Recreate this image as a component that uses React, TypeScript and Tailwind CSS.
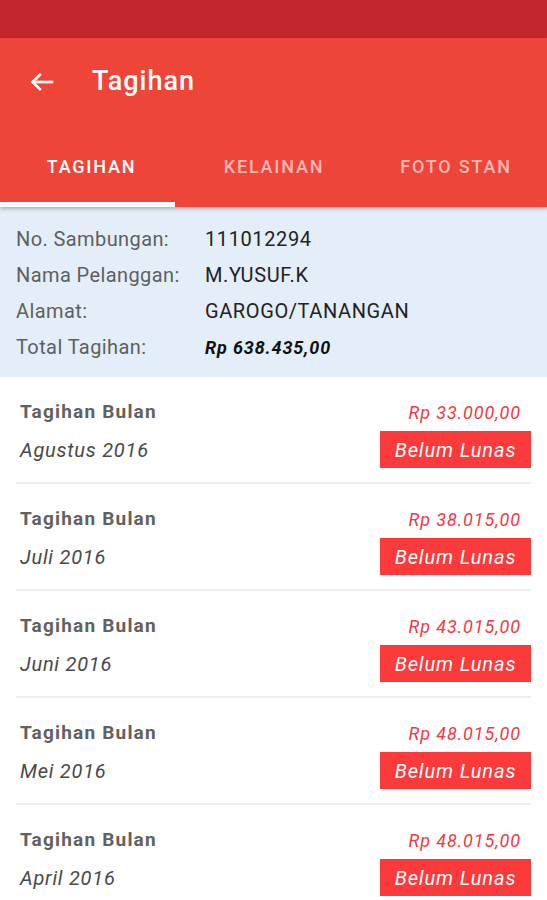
import React from "react";

const items = [
  { month: "Agustus 2016", amount: "Rp 33.000,00" },
  { month: "Juli 2016", amount: "Rp 38.015,00" },
  { month: "Juni 2016", amount: "Rp 43.015,00" },
  { month: "Mei 2016", amount: "Rp 48.015,00" },
  { month: "April 2016", amount: "Rp 48.015,00" },
];

const info = [
  { label: "No. Sambungan:", value: "111012294" },
  { label: "Nama Pelanggan:", value: "M.YUSUF.K" },
  { label: "Alamat:", value: "GAROGO/TANANGAN" },
];

export default function App() {
  return (
    <div
      className="w-[547px] h-[900px] overflow-hidden bg-white"
      style={{ fontFamily: "Roboto, 'Noto Sans', sans-serif" }}
    >
      <div className="h-[38px] bg-[#c4272b]" />
      <div className="bg-[#ef4539] relative z-10 shadow-[0_2px_4px_rgba(0,0,0,0.25)]">
        <div className="h-[87px] flex items-center">
          <svg
            width="28"
            height="28"
            viewBox="0 0 24 24"
            className="ml-[28px]"
            fill="none"
            stroke="white"
            strokeWidth="2.3"
            strokeLinecap="square"
          >
            <path d="M20.5 12H5" />
            <path d="M11 5l-7 7 7 7" strokeLinecap="butt" />
          </svg>
          <div className="ml-[36px] text-white text-[27px] font-medium tracking-[1px]">Tagihan</div>
        </div>
        <div className="h-[82px] flex relative">
          <div className="w-[183px] flex items-center justify-center text-white text-[18px] font-medium tracking-[1.8px] pt-[1px]">
            TAGIHAN
          </div>
          <div className="w-[182px] flex items-center justify-center text-[#fab9b3] text-[18px] font-medium tracking-[1.8px] pt-[1px]">
            KELAINAN
          </div>
          <div className="w-[182px] flex items-center justify-center text-[#fab9b3] text-[18px] font-medium tracking-[1.8px] pt-[1px]">
            FOTO STAN
          </div>
          <div className="absolute left-0 bottom-0 w-[175px] h-[5px] bg-white" />
        </div>
      </div>
      <div className="bg-[#e3eef9] pt-[14px] pb-[12px] px-4">
        {info.map((r) => (
          <div key={r.label} className="h-[36px] flex items-center text-[20px]">
            <div className="w-[189px] text-[#5f5f5f] tracking-[0.4px]">{r.label}</div>
            <div className="text-[#222] tracking-[0.6px]">{r.value}</div>
          </div>
        ))}
        <div className="h-[36px] flex items-center text-[20px]">
          <div className="w-[189px] text-[#5f5f5f] tracking-[0.4px]">Total Tagihan:</div>
          <div className="text-[#111] font-bold italic text-[18px] tracking-[0.85px]">Rp 638.435,00</div>
        </div>
      </div>
      <div className="px-4">
        {items.map((it) => (
          <div key={it.month} className="pt-[23px] pb-[14px] border-b-2 border-[#eeeeee]">
            <div className="h-[24px] flex items-center justify-between pl-1 pr-[10px]">
              <div className="text-[19px] font-bold text-[#616161] tracking-[1.2px]">Tagihan Bulan</div>
              <div className="text-[18px] italic text-[#ee3b3f] tracking-[0.9px]">{it.amount}</div>
            </div>
            <div className="mt-[7px] h-[37px] flex items-center justify-between pl-1">
              <div className="text-[20px] italic text-[#4a4a4a] tracking-[0.75px]">{it.month}</div>
              <div className="w-[151px] h-[37px] bg-[#fb3b3b] text-white italic text-[20px] tracking-[0.9px] flex items-center justify-center">
                Belum Lunas
              </div>
            </div>
          </div>
        ))}
      </div>
    </div>
  );
}
